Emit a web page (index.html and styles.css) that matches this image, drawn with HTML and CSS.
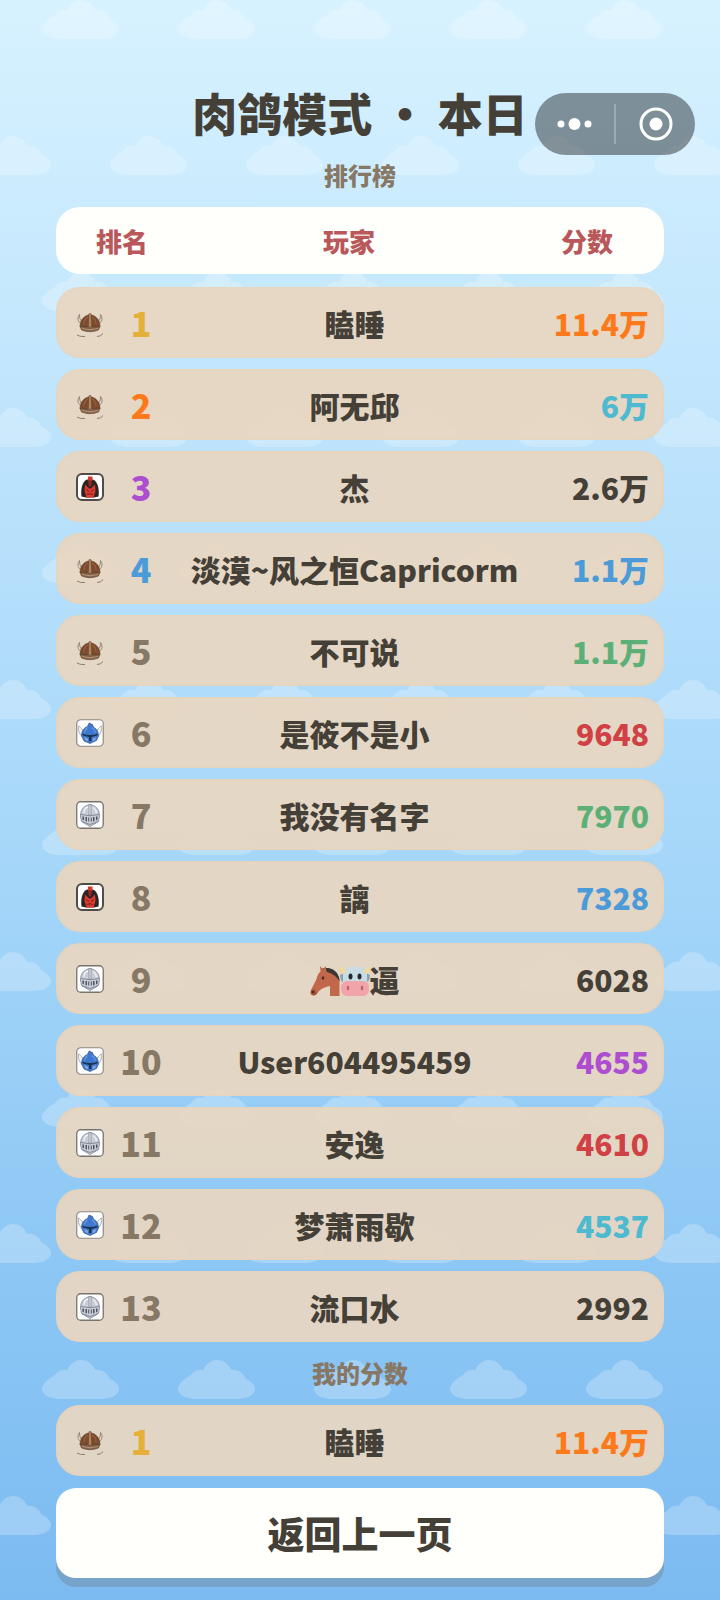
FILE: index.html
```html
<!DOCTYPE html>
<html lang="zh-CN">
<head>
    <meta charset="UTF-8" />
    <meta name="viewport" content="width=device-width, initial-scale=1.0" />
    <title>肉鸽模式 · 本日排行榜</title>
    <link rel="stylesheet" href="styles.css">
</head>
<body>
    <!-- Icons -->
    <svg class="sprites" aria-hidden="true">
        <symbol id="viking" viewBox="0 0 28 28">
            <path d="M4.500 14.500C1.500 12 1.200 8.500 3.500 5.500C3.500 9 4 11 6 12.500M23.500 14.500C26.500 12 26.800 8.500 24.500 5.500C24.500 9 24 11 22 12.500" fill="#e6dccb" stroke="#7d7265" stroke-width=".8"/>
            <path d="M4 18C4 11 7.500 7 14 5.500C20.500 7 24 11 24 18Z" fill="#7c4a2e" stroke="#5d3c28" stroke-width=".6"/>
            <path d="M8 15.500C8 11.500 10 9 12 8M20 15.500C20 11.500 18 9 16 8" fill="none" stroke="#96603e" stroke-width="1.200"/>
            <path d="M13 4.500H15L15.500 18H12.500Z" fill="#b38a62" stroke="#5d402b" stroke-width=".4"/>
            <path d="M4 17Q14 20.500 24 17L22.500 21Q14 24.500 5.500 21Z" fill="#86634a" stroke="#5b402d" stroke-width=".6"/>
            <path d="M6 19.200Q14 22 22 19.200" fill="none" stroke="#b0906f" stroke-width="1.200"/>
            <path d="M1 26Q4 28 9 27.500M21 27.500Q25 27.500 27 24.500" fill="none" stroke="#8a7d6d" stroke-width="1"/>
        </symbol>
        <symbol id="spartan" viewBox="0 0 28 28">
            <rect x="1" y="1" width="26" height="26" rx="5" fill="#fff" stroke="#504c49" stroke-width="2"/>
            <path d="M5.500 23.500C4.500 17 6 8.500 11 6.500H17C22 8.500 23.500 17 22.500 23.500L18 24.500H10Z" fill="#2b2525"/>
            <path d="M12 3.500H16.500V8H12Z" fill="#d9332c"/>
            <path d="M9 11.500L13 15.500H15L19 11.500L19.500 18L17.500 24.500H10.500L8.500 18Z" fill="#dc3a31"/>
            <path d="M12.500 7H15.500V12L14 14L12.500 12Z" fill="#9f2823"/>
            <path d="M10 16.500L13 18.500M18 16.500L15 18.500M11 21.500Q14 20 17 21.500" fill="none" stroke="#65201d" stroke-width=".9"/>
        </symbol>
        <symbol id="winged" viewBox="0 0 28 28">
            <rect x=".75" y=".75" width="26.500" height="26.500" rx="4" fill="#fff" stroke="#8c8984" stroke-width="1.200"/>
            <path d="M7 18C3 15.500 2 11 2.500 7C5 8.500 7 10.500 8 14M21 18C25 15.500 26 11 25.500 7C23 8.500 21 10.500 20 14" fill="#f3f4f5" stroke="#98a0a8" stroke-width=".8"/>
            <path d="M5.500 17C5.500 12 8 8.500 11.500 7.500L13 4L16.500 5.500L17.500 8C21 10 22.500 13 22.500 17L20.500 21.500L14 24.500L8 22Z" fill="#3f78cc" stroke="#294b82" stroke-width=".6"/>
            <path d="M11.500 8.500Q9 10.500 8.500 13.500M16 8.500Q19 10.500 19.500 13.500" fill="none" stroke="#6b9ce0" stroke-width="1.200"/>
            <path d="M6 14.500Q14 17.500 22 14.500L21 16.500L15.500 18V22H13V18L7 16.500Z" fill="#1c304f"/>
            <path d="M8 18L12 19.500V22.500L9 21ZM20 18L16.500 19.500V22.500L19.500 21Z" fill="#7ba5dd"/>
        </symbol>
        <symbol id="knight" viewBox="0 0 28 28">
            <rect x=".75" y=".75" width="26.500" height="26.500" rx="4" fill="#fff" stroke="#77746f" stroke-width="1.300"/>
            <path d="M4.500 15C4.500 8 8.500 4.500 14 3.500C19.500 4.500 23.500 8 23.500 15L22.500 20.500L14 25.500L5.500 20.500Z" fill="#c9cdd6" stroke="#858b98" stroke-width=".9"/>
            <path d="M8 12C8 8.500 10 6.500 12 6M17 6.500Q20 8.500 20.500 12" fill="none" stroke="#eef1f5" stroke-width="1.400"/>
            <path d="M13 3.500H15V14H13Z" fill="#e2e5ea" stroke="#737a88" stroke-width=".6"/>
            <path d="M5 13.500Q14 16 23 13.500" fill="none" stroke="#7b8290" stroke-width=".9"/>
            <path d="M6.500 15.500H8V19.500L6.500 18.500ZM9.500 16H11V20.500L9.500 20ZM17 16H18.500V20L17 20.500ZM20 15.500H21.500V18.500L20 19.500ZM12.200 16.500H13.200V20.500H12.200ZM14.800 16.500H15.800V20.500H14.800Z" fill="#4d5361"/>
            <path d="M6 20.500L14 23.500L22 20.500" fill="none" stroke="#7d8492" stroke-width=".9"/>
        </symbol>
        <symbol id="horse" viewBox="0 0 30 30">
            <path d="M11 3C18 0 28 3 29.500 14L25 14L13 7Z" fill="#3a3634"/>
            <path d="M10.500 5.500L10 0L13 3.500L15.500 0L16.500 4.500C23 6 27 9 29.500 14V30H20V20C16 21 12 22 9 25C7 28 6 30 3 29.500C0 28.500 0 26 1.500 23L6.500 13C7.500 9 8.500 7 10.500 5.500Z" fill="#c1684a"/>
            <path d="M16 2C23 2 29 7 29.500 15C26 10 22 7 17 6Z" fill="#3a3634"/>
            <ellipse cx="13" cy="12" rx="1.300" ry="1.700" fill="#47302b"/>
            <path d="M1 24.500L4 23L7 27Q5 30 2.500 29Q0 28 1 24.500Z" fill="#9d4e3a"/>
            <circle cx="3" cy="26" r="1.200" fill="#4b2821"/>
        </symbol>
        <symbol id="cow" viewBox="0 0 30 30">
            <path d="M0 9L6 6V17Q0 17 0 9ZM30 9L24 6V17Q30 17 30 9Z" fill="#88a4b5"/>
            <path d="M3 9Q3 1 10 1H20Q27 1 27 9V22H3Z" fill="#c9dce6"/>
            <path d="M4 8Q-.5 6 .5 0Q3 4 7 4ZM26 8Q30.500 6 29.500 0Q27 4 23 4Z" fill="#f5d891"/>
            <rect x="1" y="15" width="28" height="15" rx="6" fill="#f1a4aa"/>
            <ellipse cx="10.500" cy="10.500" rx="2" ry="3" fill="#25292d"/>
            <ellipse cx="19.500" cy="10.500" rx="2" ry="3" fill="#25292d"/>
            <ellipse cx="8" cy="22" rx="1.300" ry="2.500" fill="#bd6567"/>
            <ellipse cx="22" cy="22" rx="1.300" ry="2.500" fill="#bd6567"/>
        </symbol>
    </svg>

    <!-- Wolkenmuster -->
    <svg class="clouds" aria-hidden="true">
        <defs>
            <path id="cloud" d="M0 29C0 23 8 18 13 15C16 10 21 9 25 10C28 4 33 0 39 0C45 0 51 4 53 10C60 9 66 14 67 18C73 21 77 25 77 29C77 35 70 39 59 39H19C8 39 0 35 0 29Z" fill="#fff"/>
            <pattern id="sky" width="136" height="272" patternUnits="userSpaceOnUse">
                <use href="#cloud" x="42" y="0"/>
                <use href="#cloud" x="-26" y="136"/>
                <use href="#cloud" x="110" y="136"/>
            </pattern>
        </defs>
        <rect width="100%" height="100%" fill="url(#sky)"/>
    </svg>

    <div class="capsule">
        <button type="button" aria-label="更多">
            <svg width="36" height="36" viewBox="0 0 36 36" fill="#fff"><circle cx="4" cy="18" r="3.500"/><circle cx="17.500" cy="18" r="6"/><circle cx="31" cy="18" r="3.500"/></svg>
        </button>
        <button type="button" aria-label="关闭">
            <svg width="36" height="36" viewBox="0 0 36 36"><circle cx="18" cy="18" r="15" fill="none" stroke="#fff" stroke-width="3"/><circle cx="18" cy="18" r="6.500" fill="#fff"/></svg>
        </button>
    </div>

    <main class="page">
        <h1>肉鸽模式 ・ 本日</h1>
        <h2>排行榜</h2>

        <table class="board">
            <thead>
                <tr class="head"><th colspan="2">排名</th><th>玩家</th><th>分数</th></tr>
            </thead>
            <tbody>
                <tr class="row"><td class="icon"><svg><use href="#viking"/></svg></td><td class="rank gold">1</td><td class="name">瞌睡</td><td class="score orange">11.4万</td></tr>
                <tr class="row"><td class="icon"><svg><use href="#viking"/></svg></td><td class="rank orange">2</td><td class="name">阿无邱</td><td class="score cyan">6万</td></tr>
                <tr class="row"><td class="icon"><svg><use href="#spartan"/></svg></td><td class="rank purple">3</td><td class="name">杰</td><td class="score">2.6万</td></tr>
                <tr class="row"><td class="icon"><svg><use href="#viking"/></svg></td><td class="rank blue">4</td><td class="name">淡漠~风之恒Capricorm</td><td class="score blue">1.1万</td></tr>
                <tr class="row"><td class="icon"><svg><use href="#viking"/></svg></td><td class="rank">5</td><td class="name">不可说</td><td class="score green">1.1万</td></tr>
                <tr class="row"><td class="icon"><svg><use href="#winged"/></svg></td><td class="rank">6</td><td class="name">是筱不是小</td><td class="score red">9648</td></tr>
                <tr class="row"><td class="icon"><svg><use href="#knight"/></svg></td><td class="rank">7</td><td class="name">我没有名字</td><td class="score green">7970</td></tr>
                <tr class="row"><td class="icon"><svg><use href="#spartan"/></svg></td><td class="rank">8</td><td class="name">謧</td><td class="score blue">7328</td></tr>
                <tr class="row"><td class="icon"><svg><use href="#knight"/></svg></td><td class="rank">9</td><td class="name"><svg class="emoji" role="img" aria-label="🐴"><use href="#horse"/></svg><svg class="emoji" role="img" aria-label="🐮"><use href="#cow"/></svg>逼</td><td class="score">6028</td></tr>
                <tr class="row"><td class="icon"><svg><use href="#winged"/></svg></td><td class="rank">10</td><td class="name">User604495459</td><td class="score purple">4655</td></tr>
                <tr class="row"><td class="icon"><svg><use href="#knight"/></svg></td><td class="rank">11</td><td class="name">安逸</td><td class="score red">4610</td></tr>
                <tr class="row"><td class="icon"><svg><use href="#winged"/></svg></td><td class="rank">12</td><td class="name">梦萧雨歇</td><td class="score cyan">4537</td></tr>
                <tr class="row"><td class="icon"><svg><use href="#knight"/></svg></td><td class="rank">13</td><td class="name">流口水</td><td class="score">2992</td></tr>
            </tbody>
        </table>

        <h2 class="mine-title">我的分数</h2>
        <table class="board">
            <tbody>
                <tr class="row"><td class="icon"><svg><use href="#viking"/></svg></td><td class="rank gold">1</td><td class="name">瞌睡</td><td class="score orange">11.4万</td></tr>
            </tbody>
        </table>

        <button type="button" class="back">返回上一页</button>
    </main>
</body>
</html>
```
FILE: styles.css
```css
:root {
    --text: #454037;
    --muted: #877765;
    --card: #fffffb;
    --row: rgba(232, 214, 193, 0.93);
}
* {
    box-sizing: border-box;
}
body {
    margin: 0;
    min-height: 100vh;
    position: relative;
    background: linear-gradient(#d7f2ff 0%, #b9e1fc 32%, #a4d6f9 55%, #8ac5f4 82%, #7cbbf1 100%);
    color: var(--text);
    font-family: "Noto Sans CJK SC", sans-serif;
    font-weight: 900;
}
.sprites {
    position: absolute;
    width: 0;
    height: 0;
}
.clouds {
    position: absolute;
    inset: 0;
    width: 100%;
    height: 100%;
    opacity: 0.24;
}
.page {
    position: relative;
    padding: 79px 56px 13px;
}
h1, h2 {
    margin: 0;
    text-align: center;
    font-weight: 900;
}
h1 {
    font-size: 45px;
    line-height: 68px;
}
h2 {
    font-size: 24px;
    line-height: 36px;
    color: var(--muted);
    margin: 10px 0 14px;
}

/* Mini-Programm-Kapsel oben rechts */
.capsule {
    position: absolute;
    z-index: 2;
    top: 93px;
    right: 25px;
    width: 160px;
    height: 62px;
    display: flex;
    align-items: center;
    border-radius: 31px;
    background: rgba(0, 0, 0, 0.4);
}
.capsule button {
    flex: 1;
    height: 40px;
    padding: 0;
    border: none;
    background: none;
    display: flex;
    align-items: center;
    justify-content: center;
    cursor: pointer;
}
.capsule button + button {
    border-left: 2px solid rgba(255, 255, 255, 0.25);
}

.board, .board thead, .board tbody {
    display: flex;
    flex-direction: column;
}
.board tbody {
    gap: 11px;
}
.head {
    display: grid;
    grid-template-columns: 132px 1fr 154px;
    align-items: center;
    height: 67px;
    margin-bottom: 13px;
    border-radius: 24px;
    background: var(--card);
    color: #b9585b;
    font-size: 26px;
}
.row {
    display: grid;
    grid-template-columns: 28px 74px 1fr 118px;
    align-items: center;
    height: 71px;
    padding: 0 15px 0 20px;
    border-radius: 24px;
    background: var(--row);
    box-shadow: inset 0 0 3px rgba(232, 205, 170, 0.8);
}
th, td {
    padding: 0;
    text-align: center;
    font-weight: 900;
    white-space: nowrap;
}
.icon svg {
    display: block;
    width: 28px;
    height: 28px;
}
.rank {
    font-size: 34px;
    color: var(--muted);
}
.name {
    font-size: 30px;
}
.emoji {
    width: 30px;
    height: 30px;
    vertical-align: -4px;
}
.score {
    font-size: 30px;
    text-align: right;
}
.gold { color: #e5b03a; }
.orange { color: #fd7a1c; }
.purple { color: #ad4ed0; }
.blue { color: #4b9bd9; }
.cyan { color: #4dbad0; }
.green { color: #5db075; }
.red { color: #cf4144; }

.mine-title {
    margin: 13px 0 14px;
}
.back {
    display: block;
    width: 100%;
    height: 90px;
    margin-top: 12px;
    border: none;
    border-radius: 20px;
    background: var(--card);
    box-shadow: 0 9px 0 #78a4cb;
    color: var(--text);
    font: inherit;
    font-size: 37px;
    cursor: pointer;
}
```
